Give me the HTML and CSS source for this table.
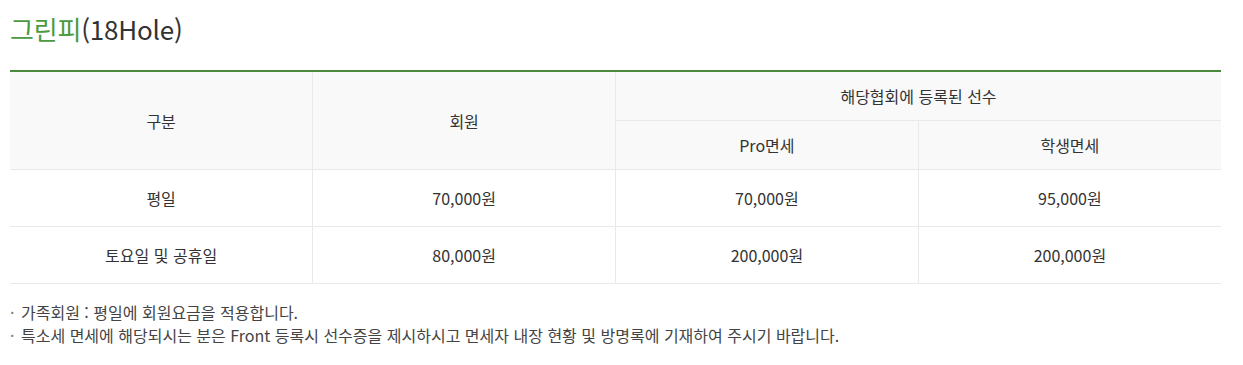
FILE: index.html
```html
<!DOCTYPE html>
<html lang="ko">
<head>
<meta charset="utf-8">
<title>그린피</title>
<link rel="stylesheet" href="styles.css">
</head>
<body>
<div class="wrap">
  <h2 class="title"><span class="green">그린피</span>(18Hole)</h2>
  <table class="fee">
    <colgroup><col><col><col><col></colgroup>
    <thead>
      <tr>
        <th rowspan="2">구분</th>
        <th rowspan="2">회원</th>
        <th colspan="2" class="h1">해당협회에 등록된 선수</th>
      </tr>
      <tr>
        <th class="h2">Pro면세</th>
        <th class="h2">학생면세</th>
      </tr>
    </thead>
    <tbody>
      <tr><td>평일</td><td>70,000원</td><td>70,000원</td><td>95,000원</td></tr>
      <tr><td>토요일 및 공휴일</td><td>80,000원</td><td>200,000원</td><td>200,000원</td></tr>
    </tbody>
  </table>
  <ul class="notes">
    <li>가족회원 : 평일에 회원요금을 적용합니다.</li>
    <li>특소세 면세에 해당되시는 분은 Front 등록시 선수증을 제시하시고 면세자 내장 현황 및 방명록에 기재하여 주시기 바랍니다.</li>
  </ul>
</div>
</body>
</html>
```
FILE: styles.css
```css
html, body { margin: 0; padding: 0; background: #fff; }
body {
  font-family: "Noto Sans CJK KR", "Noto Sans", sans-serif;
  color: #333;
}
.wrap { width: 1211px; padding: 0 10px; }
.title {
  margin: 0;
  padding-top: 11px;
  font-size: 26px;
  font-weight: 400;
  line-height: 36px;
  color: #333;
  letter-spacing: -0.2px;
}
.green { color: #4a9a3f; }
.fee {
  margin-top: 23px;
  width: 100%;
  border-collapse: collapse;
  table-layout: fixed;
  border-top: 2px solid #4a8a3a;
  font-size: 16px;
}
.fee th, .fee td {
  border: 1px solid #e9e9e9;
  text-align: center;
  font-weight: 400;
  color: #333;
  padding: 0;
  line-height: 20px;
}
.fee tr > :first-child { border-left: none; }
.fee tr > :last-child { border-right: none; }
.fee th { background: #f8f9f8; height: 48px; }
.fee td { height: 56px; }
.notes {
  list-style: none;
  margin: 17px 0 0;
  padding: 0;
  font-size: 16px;
  line-height: 23px;
  color: #444;
}
.notes li { position: relative; padding-left: 11px; }
.notes li::before {
  content: "·";
  position: absolute;
  left: 0;
  top: 0;
  color: #6a8a5a;
}
```
